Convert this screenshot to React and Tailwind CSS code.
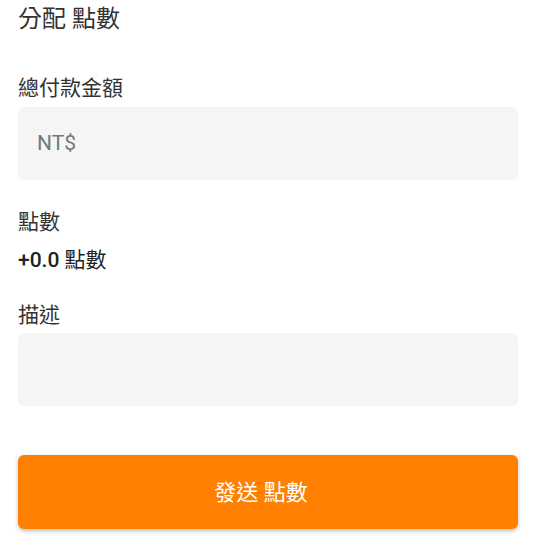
export default function App() {
  return (
    <main
      className="min-h-screen bg-white px-[18px] text-[#333333]"
      style={{ fontFamily: 'Roboto, "Noto Sans CJK TC", sans-serif' }}
    >
      <h1 className="pt-[3px] text-[24px] leading-[32px]">分配 點數</h1>

      <div className="mt-[39px]">
        <label className="block text-[21px] leading-[28px]">總付款金額</label>
        <div className="mt-[5px] flex h-[73px] items-center rounded-[6px] bg-[#f5f5f5] px-[19px]">
          <span className="text-[21px] text-[#6f7b7b]">NT$</span>
        </div>
      </div>

      <div className="mt-[28px]">
        <p className="text-[21px] leading-[28px]">點數</p>
        <p className="mt-[10px] text-[21px] leading-[28px] text-[#222]">
          <span className="font-medium">+0.0</span> 點數
        </p>
      </div>

      <div className="mt-[27px]">
        <label className="block text-[21px] leading-[28px]">描述</label>
        <div className="mt-[4px] h-[73px] rounded-[6px] bg-[#f5f5f5]" />
      </div>

      <button
        type="button"
        className="mt-[49px] flex h-[74px] w-full items-center justify-center rounded-[6px] bg-[#ff8000] pr-[14px] text-[22px] text-white shadow-[0_2px_4px_rgba(0,0,0,0.25)]"
      >
        發送 點數
      </button>
    </main>
  );
}
